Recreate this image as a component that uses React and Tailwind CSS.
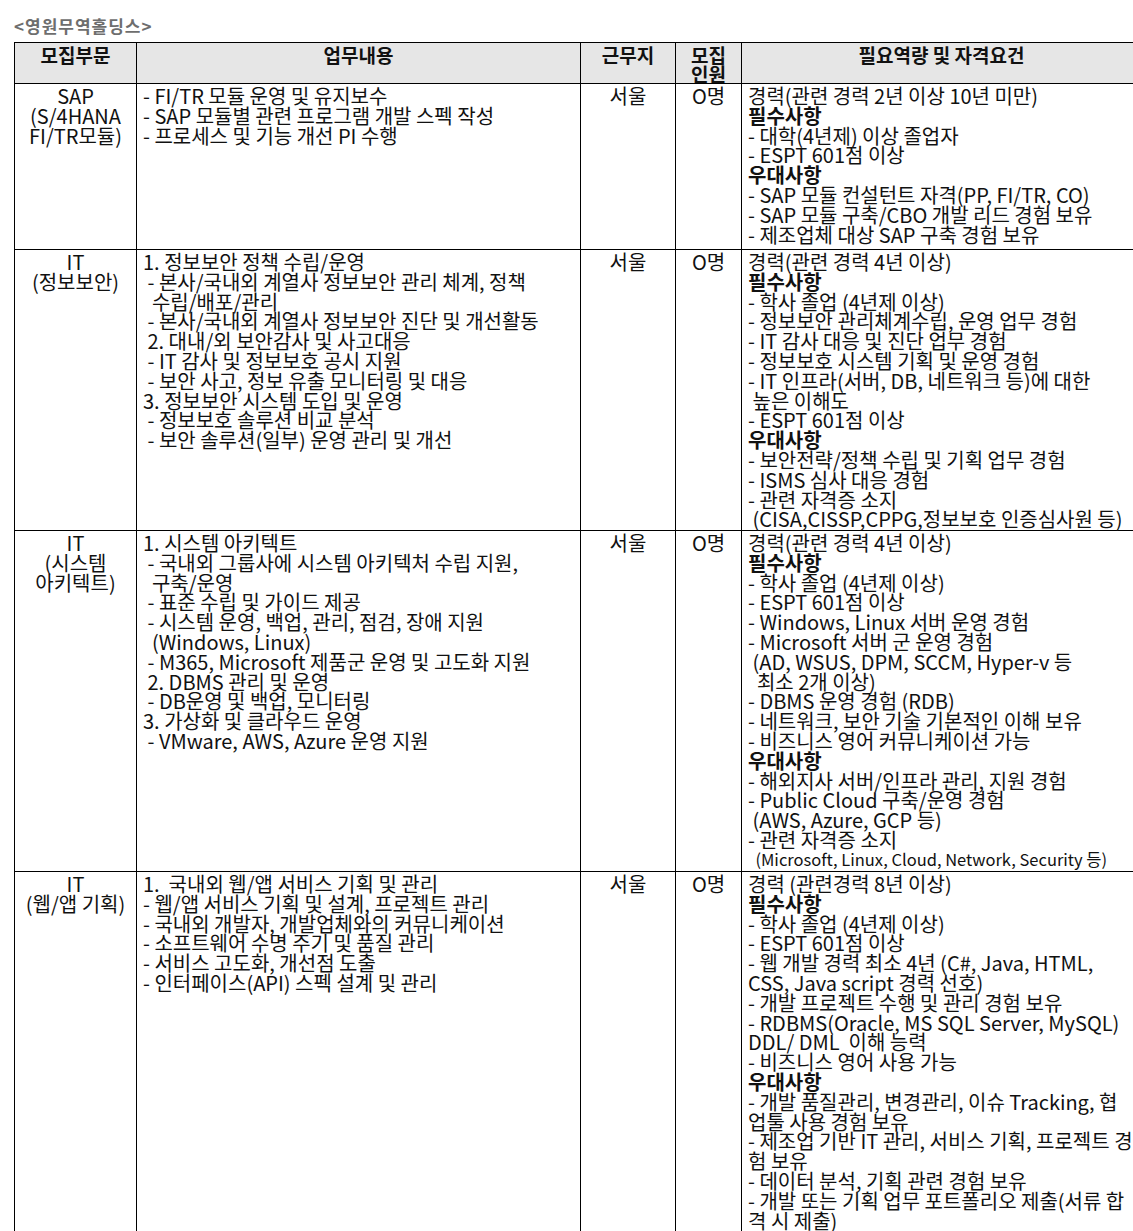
const B = (t) => ({ t, b: true })
const S = (t) => ({ t, sm: true })

const rows = [
  {
    h: 'h-[166px]',
    dept: ['SAP', '(S/4HANA', 'FI/TR모듈)'],
    tasks: ['- FI/TR 모듈 운영 및 유지보수', '- SAP 모듈별 관련 프로그램 개발 스펙 작성', '- 프로세스 및 기능 개선 PI 수행'],
    reqs: [
      '경력(관련 경력 2년 이상 10년 미만)',
      B('필수사항'),
      '- 대학(4년제) 이상 졸업자',
      '- ESPT 601점 이상',
      B('우대사항'),
      '- SAP 모듈 컨설턴트 자격(PP, FI/TR, CO)',
      '- SAP 모듈 구축/CBO 개발 리드 경험 보유',
      '- 제조업체 대상 SAP 구축 경험 보유',
    ],
  },
  {
    h: 'h-[281px]',
    dept: ['IT', '(정보보안)'],
    tasks: [
      '1. 정보보안 정책 수립/운영',
      ' - 본사/국내외 계열사 정보보안 관리 체계, 정책',
      '  수립/배포/관리',
      ' - 본사/국내외 계열사 정보보안 진단 및 개선활동',
      ' 2. 대내/외 보안감사 및 사고대응',
      ' - IT 감사 및 정보보호 공시 지원',
      ' - 보안 사고, 정보 유출 모니터링 및 대응',
      '3. 정보보안 시스템 도입 및 운영',
      ' - 정보보호 솔루션 비교 분석',
      ' - 보안 솔루션(일부) 운영 관리 및 개선',
    ],
    reqs: [
      '경력(관련 경력 4년 이상)',
      B('필수사항'),
      '- 학사 졸업 (4년제 이상)',
      '- 정보보안 관리체계수립, 운영 업무 경험',
      '- IT 감사 대응 및 진단 업무 경험',
      '- 정보보호 시스템 기획 및 운영 경험',
      '- IT 인프라(서버, DB, 네트워크 등)에 대한',
      ' 높은 이해도',
      '- ESPT 601점 이상',
      B('우대사항'),
      '- 보안전략/정책 수립 및 기획 업무 경험',
      '- ISMS 심사 대응 경험',
      '- 관련 자격증 소지',
      ' (CISA,CISSP,CPPG,정보보호 인증심사원 등)',
    ],
  },
  {
    h: 'h-[341px]',
    dept: ['IT', '(시스템', '아키텍트)'],
    tasks: [
      '1. 시스템 아키텍트',
      ' - 국내외 그룹사에 시스템 아키텍처 수립 지원,',
      '  구축/운영',
      ' - 표준 수립 및 가이드 제공',
      ' - 시스템 운영, 백업, 관리, 점검, 장애 지원',
      '  (Windows, Linux)',
      ' - M365, Microsoft 제품군 운영 및 고도화 지원',
      ' 2. DBMS 관리 및 운영',
      ' - DB운영 및 백업, 모니터링',
      '3. 가상화 및 클라우드 운영',
      ' - VMware, AWS, Azure 운영 지원',
    ],
    reqs: [
      '경력(관련 경력 4년 이상)',
      B('필수사항'),
      '- 학사 졸업 (4년제 이상)',
      '- ESPT 601점 이상',
      '- Windows, Linux 서버 운영 경험',
      '- Microsoft 서버 군 운영 경험',
      ' (AD, WSUS, DPM, SCCM, Hyper-v 등',
      '  최소 2개 이상)',
      '- DBMS 운영 경험 (RDB)',
      '- 네트워크, 보안 기술 기본적인 이해 보유',
      '- 비즈니스 영어 커뮤니케이션 가능',
      B('우대사항'),
      '- 해외지사 서버/인프라 관리, 지원 경험',
      '- Public Cloud 구축/운영 경험',
      ' (AWS, Azure, GCP 등)',
      '- 관련 자격증 소지',
      S('  (Microsoft, Linux, Cloud, Network, Security 등)'),
    ],
  },
  {
    h: 'h-[380px]',
    dept: ['IT', '(웹/앱 기획)'],
    tasks: [
      '1.  국내외 웹/앱 서비스 기획 및 관리',
      '- 웹/앱 서비스 기획 및 설계, 프로젝트 관리',
      '- 국내외 개발자, 개발업체와의 커뮤니케이션',
      '- 소프트웨어 수명 주기 및 품질 관리',
      '- 서비스 고도화, 개선점 도출',
      '- 인터페이스(API) 스펙 설계 및 관리',
    ],
    reqs: [
      '경력 (관련경력 8년 이상)',
      B('필수사항'),
      '- 학사 졸업 (4년제 이상)',
      '- ESPT 601점 이상',
      '- 웹 개발 경력 최소 4년 (C#, Java, HTML,',
      'CSS, Java script 경력 선호)',
      '- 개발 프로젝트 수행 및 관리 경험 보유',
      '- RDBMS(Oracle, MS SQL Server, MySQL)',
      'DDL/ DML  이해 능력',
      '- 비즈니스 영어 사용 가능',
      B('우대사항'),
      '- 개발 품질관리, 변경관리, 이슈 Tracking, 협',
      '업툴 사용 경험 보유',
      '- 제조업 기반 IT 관리, 서비스 기획, 프로젝트 경',
      '험 보유',
      '- 데이터 분석, 기획 관련 경험 보유',
      '- 개발 또는 기획 업무 포트폴리오 제출(서류 합',
      '격 시 제출)',
    ],
  },
]

function Lines({ items }) {
  return items.map((it, i) => {
    const o = typeof it === 'string' ? { t: it } : it
    return (
      <div
        key={i}
        className={`whitespace-pre ${o.b ? 'font-bold' : ''} ${o.sm ? 'text-[16.5px]' : ''}`}
      >
        {o.t}
      </div>
    )
  })
}

export default function App() {
  const cell = 'border border-black align-top p-0 pt-[2px]'
  return (
    <div className="w-[1133px] h-[1231px] overflow-hidden bg-white text-[#111] font-['Noto_Sans_CJK_KR','Noto_Sans',sans-serif]">
      <div className="h-[42px] pl-[14px] pt-[15px] text-[17px] tracking-[1px] leading-[22px] font-bold text-[#6e6e6e]">
        &lt;영원무역홀딩스&gt;
      </div>
      <table className="ml-[14px] table-fixed border-collapse w-[1127px] text-[20px] leading-[19.8px]">
        <colgroup>
          <col className="w-[122px]" />
          <col className="w-[444px]" />
          <col className="w-[95px]" />
          <col className="w-[66px]" />
          <col className="w-[400px]" />
        </colgroup>
        <thead>
          <tr className="h-[41px] bg-[#e6e6e6] font-bold text-[19px]">
            <th className={`${cell} text-center`}>모집부문</th>
            <th className={`${cell} text-center`}>업무내용</th>
            <th className={`${cell} text-center`}>근무지</th>
            <th className={`${cell} text-center leading-[19px]`}>
              모집
              <br />
              인원
            </th>
            <th className={`${cell} text-center`}>필요역량 및 자격요건</th>
          </tr>
        </thead>
        <tbody>
          {rows.map((r, i) => (
            <tr key={i} className={r.h}>
              <td className={`${cell} text-center`}>
                <Lines items={r.dept} />
              </td>
              <td className={`${cell} px-[6px]`}>
                <Lines items={r.tasks} />
              </td>
              <td className={`${cell} text-center`}>서울</td>
              <td className={`${cell} text-center`}>O명</td>
              <td className={`${cell} px-[6px]`}>
                <Lines items={r.reqs} />
              </td>
            </tr>
          ))}
        </tbody>
      </table>
    </div>
  )
}
